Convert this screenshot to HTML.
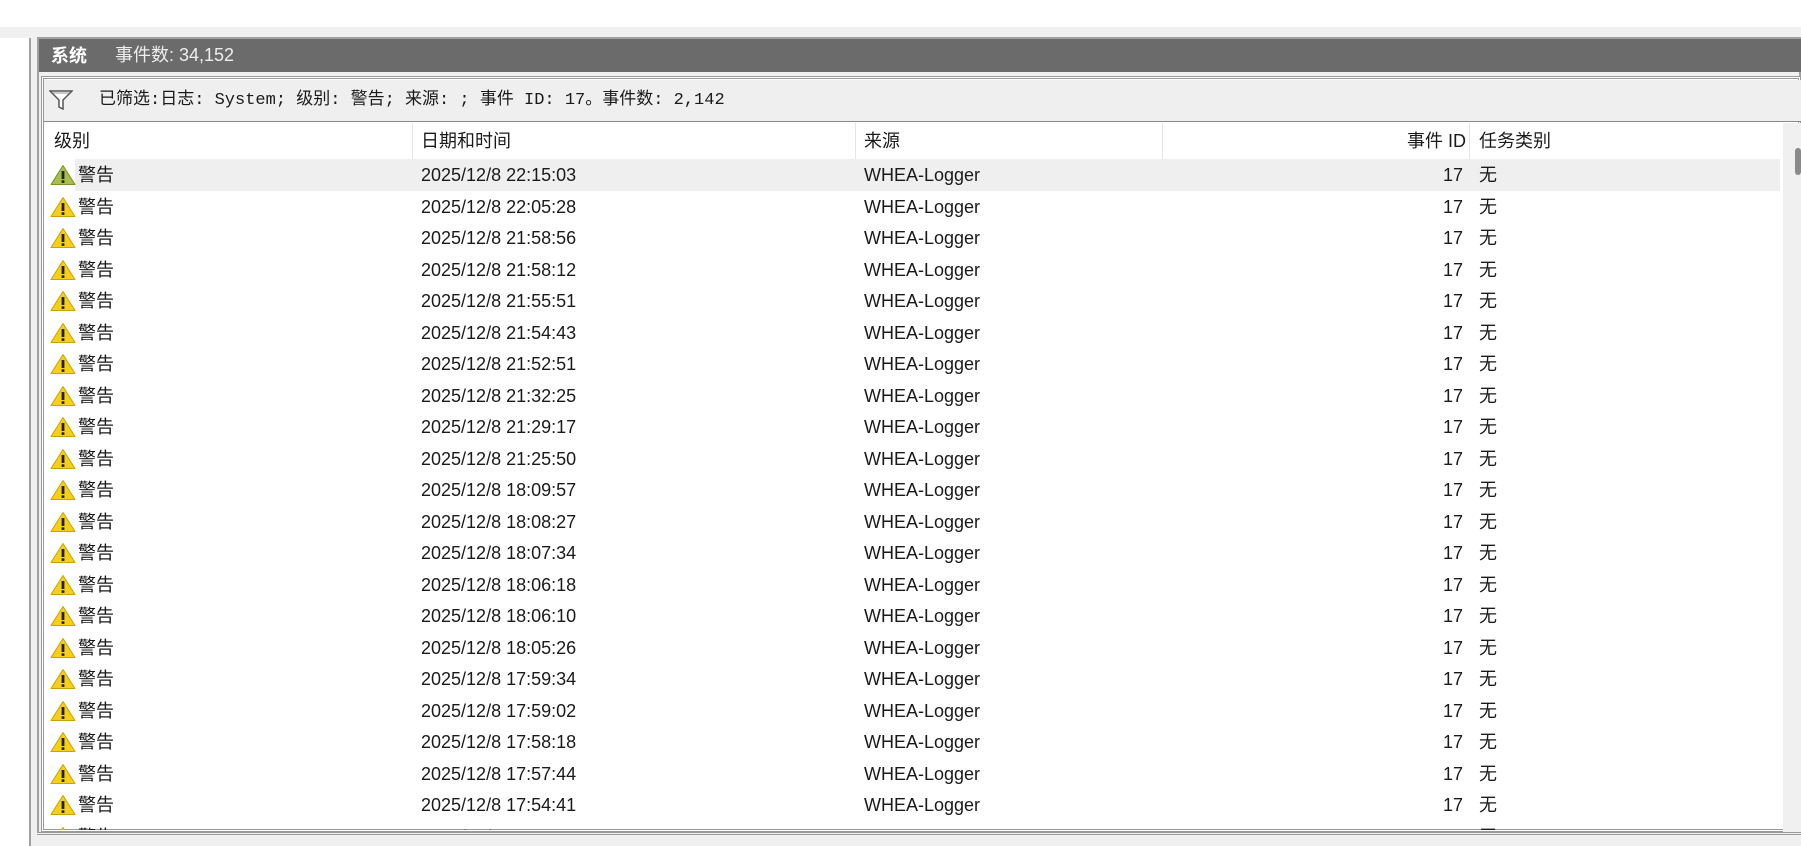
<!DOCTYPE html>
<html><head><meta charset="utf-8"><style>
*{margin:0;padding:0;box-sizing:border-box}
body{width:1801px;height:846px;overflow:hidden;background:#fff;font-family:"Liberation Sans","Noto Sans CJK SC",sans-serif;color:#1a1a1a;position:relative}
.abs{position:absolute}
.row{position:absolute;left:44px;width:1737px;height:31.5px;font-size:18px;line-height:33px}
.row span{position:absolute;top:0}
.c1{left:34px}.c2{left:377px}.c3{left:820px}.c4{right:318px}.c5{left:1435px}
.ic{position:absolute;left:6px;top:5px}
</style></head><body>
<div class="abs" style="left:0;top:27px;width:1801px;height:819px;background:#f0f0f0"></div>
<div class="abs" style="left:0;top:38px;width:31px;height:808px;background:#fff;border-right:2px solid #a0a0a0"></div>
<div class="abs" style="left:37px;top:37px;width:1764px;height:809px;border:2px solid #a0a0a0;background:#f0f0f0"></div>
<div class="abs" style="left:39px;top:39px;width:1762px;height:33px;background:#6b6b6b;color:#fff;font-size:18px;line-height:33px">
<b style="position:absolute;left:12px;font-family:'Noto Sans CJK SC',sans-serif">系统</b><span style="position:absolute;left:76px;color:#eee">事件数: 34,152</span></div>
<div class="abs" style="left:41px;top:76px;width:1760px;height:756px;border:3px double #9a9a9a;background:#fff"></div>
<div class="abs" style="left:44px;top:80px;width:1757px;height:42px;background:#efefef;border-bottom:1px solid #888"></div>
<svg class="abs" style="left:49px;top:90px" width="24" height="20" viewBox="0 0 24 20"><path d="M1 1H23L14 10V19L10 17V10Z" fill="#fff" stroke="#555" stroke-width="1.5"/><path d="M4 3H20" stroke="#999"/></svg>
<div class="abs" style="left:99px;top:89px;font-size:17px;line-height:24px;white-space:pre;font-family:'Liberation Mono','Noto Sans CJK SC',monospace">已筛选:日志: System; 级别: 警告; 来源: ; 事件 ID: 17。事件数: 2,142</div>
<div class="abs" style="left:44px;top:123px;width:1740px;height:36px;background:#fff;font-size:18px;line-height:36px">
<span style="position:absolute;left:10px">级别</span>
<span style="position:absolute;left:368px;top:0;height:36px;border-left:1px solid #e5e5e5"></span>
<span style="position:absolute;left:377px">日期和时间</span>
<span style="position:absolute;left:811px;height:36px;border-left:1px solid #e5e5e5"></span>
<span style="position:absolute;left:820px">来源</span>
<span style="position:absolute;left:1118px;height:36px;border-left:1px solid #e5e5e5"></span>
<span style="position:absolute;right:318px">事件 ID</span>
<span style="position:absolute;left:1425px;height:36px;border-left:1px solid #e5e5e5"></span>
<span style="position:absolute;left:1435px">任务类别</span>
</div>
<div class="abs" style="left:1783px;top:123px;width:18px;height:709px;background:#f0f0f0"></div>
<div class="abs" style="left:1795px;top:148px;width:6px;height:27px;background:#8a8a8a;border-radius:3px"></div>
<div class="abs" style="left:44px;top:159px;width:1739px;height:671px;overflow:hidden">
<div id="rows" style="position:relative;left:-44px"></div>
</div>
<div class="abs" style="left:37px;top:832px;width:1764px;height:14px;border-top:3px double #9a9a9a;background:#f0f0f0"></div>
<script>
var t=["22:15:03","22:05:28","21:58:56","21:58:12","21:55:51","21:54:43","21:52:51","21:32:25","21:29:17","21:25:50","18:09:57","18:08:27","18:07:34","18:06:18","18:06:10","18:05:26","17:59:34","17:59:02","17:58:18","17:57:44","17:54:41","17:53:20"];
var h="";
t.forEach(function(x,i){
var g=i==0;
h+='<div class="row" style="top:'+(i*31.5)+'px">'+(g?'<div style="position:absolute;left:31px;top:0;width:1705px;height:31.5px;background:#efefef"></div>':'')+
'<svg class="ic" width="26" height="22" viewBox="0 0 26 22"><path d="M13 1.5L25 20.5H1Z" fill="'+(g?'#a8bf4a':'#f5cf1a')+'" stroke="'+(g?'#7b8f2c':'#c9a400')+'" stroke-linejoin="round"/><rect x="11.6" y="7" width="2.8" height="8" fill="#222"/><rect x="11.6" y="16.3" width="2.8" height="2.6" fill="#222"/></svg>'+
'<span class="c1">警告</span><span class="c2">2025/12/8 '+x+'</span><span class="c3">WHEA-Logger</span><span class="c4">17</span><span class="c5">无</span></div>';
});
document.getElementById("rows").innerHTML=h;
</script>
</body></html>
